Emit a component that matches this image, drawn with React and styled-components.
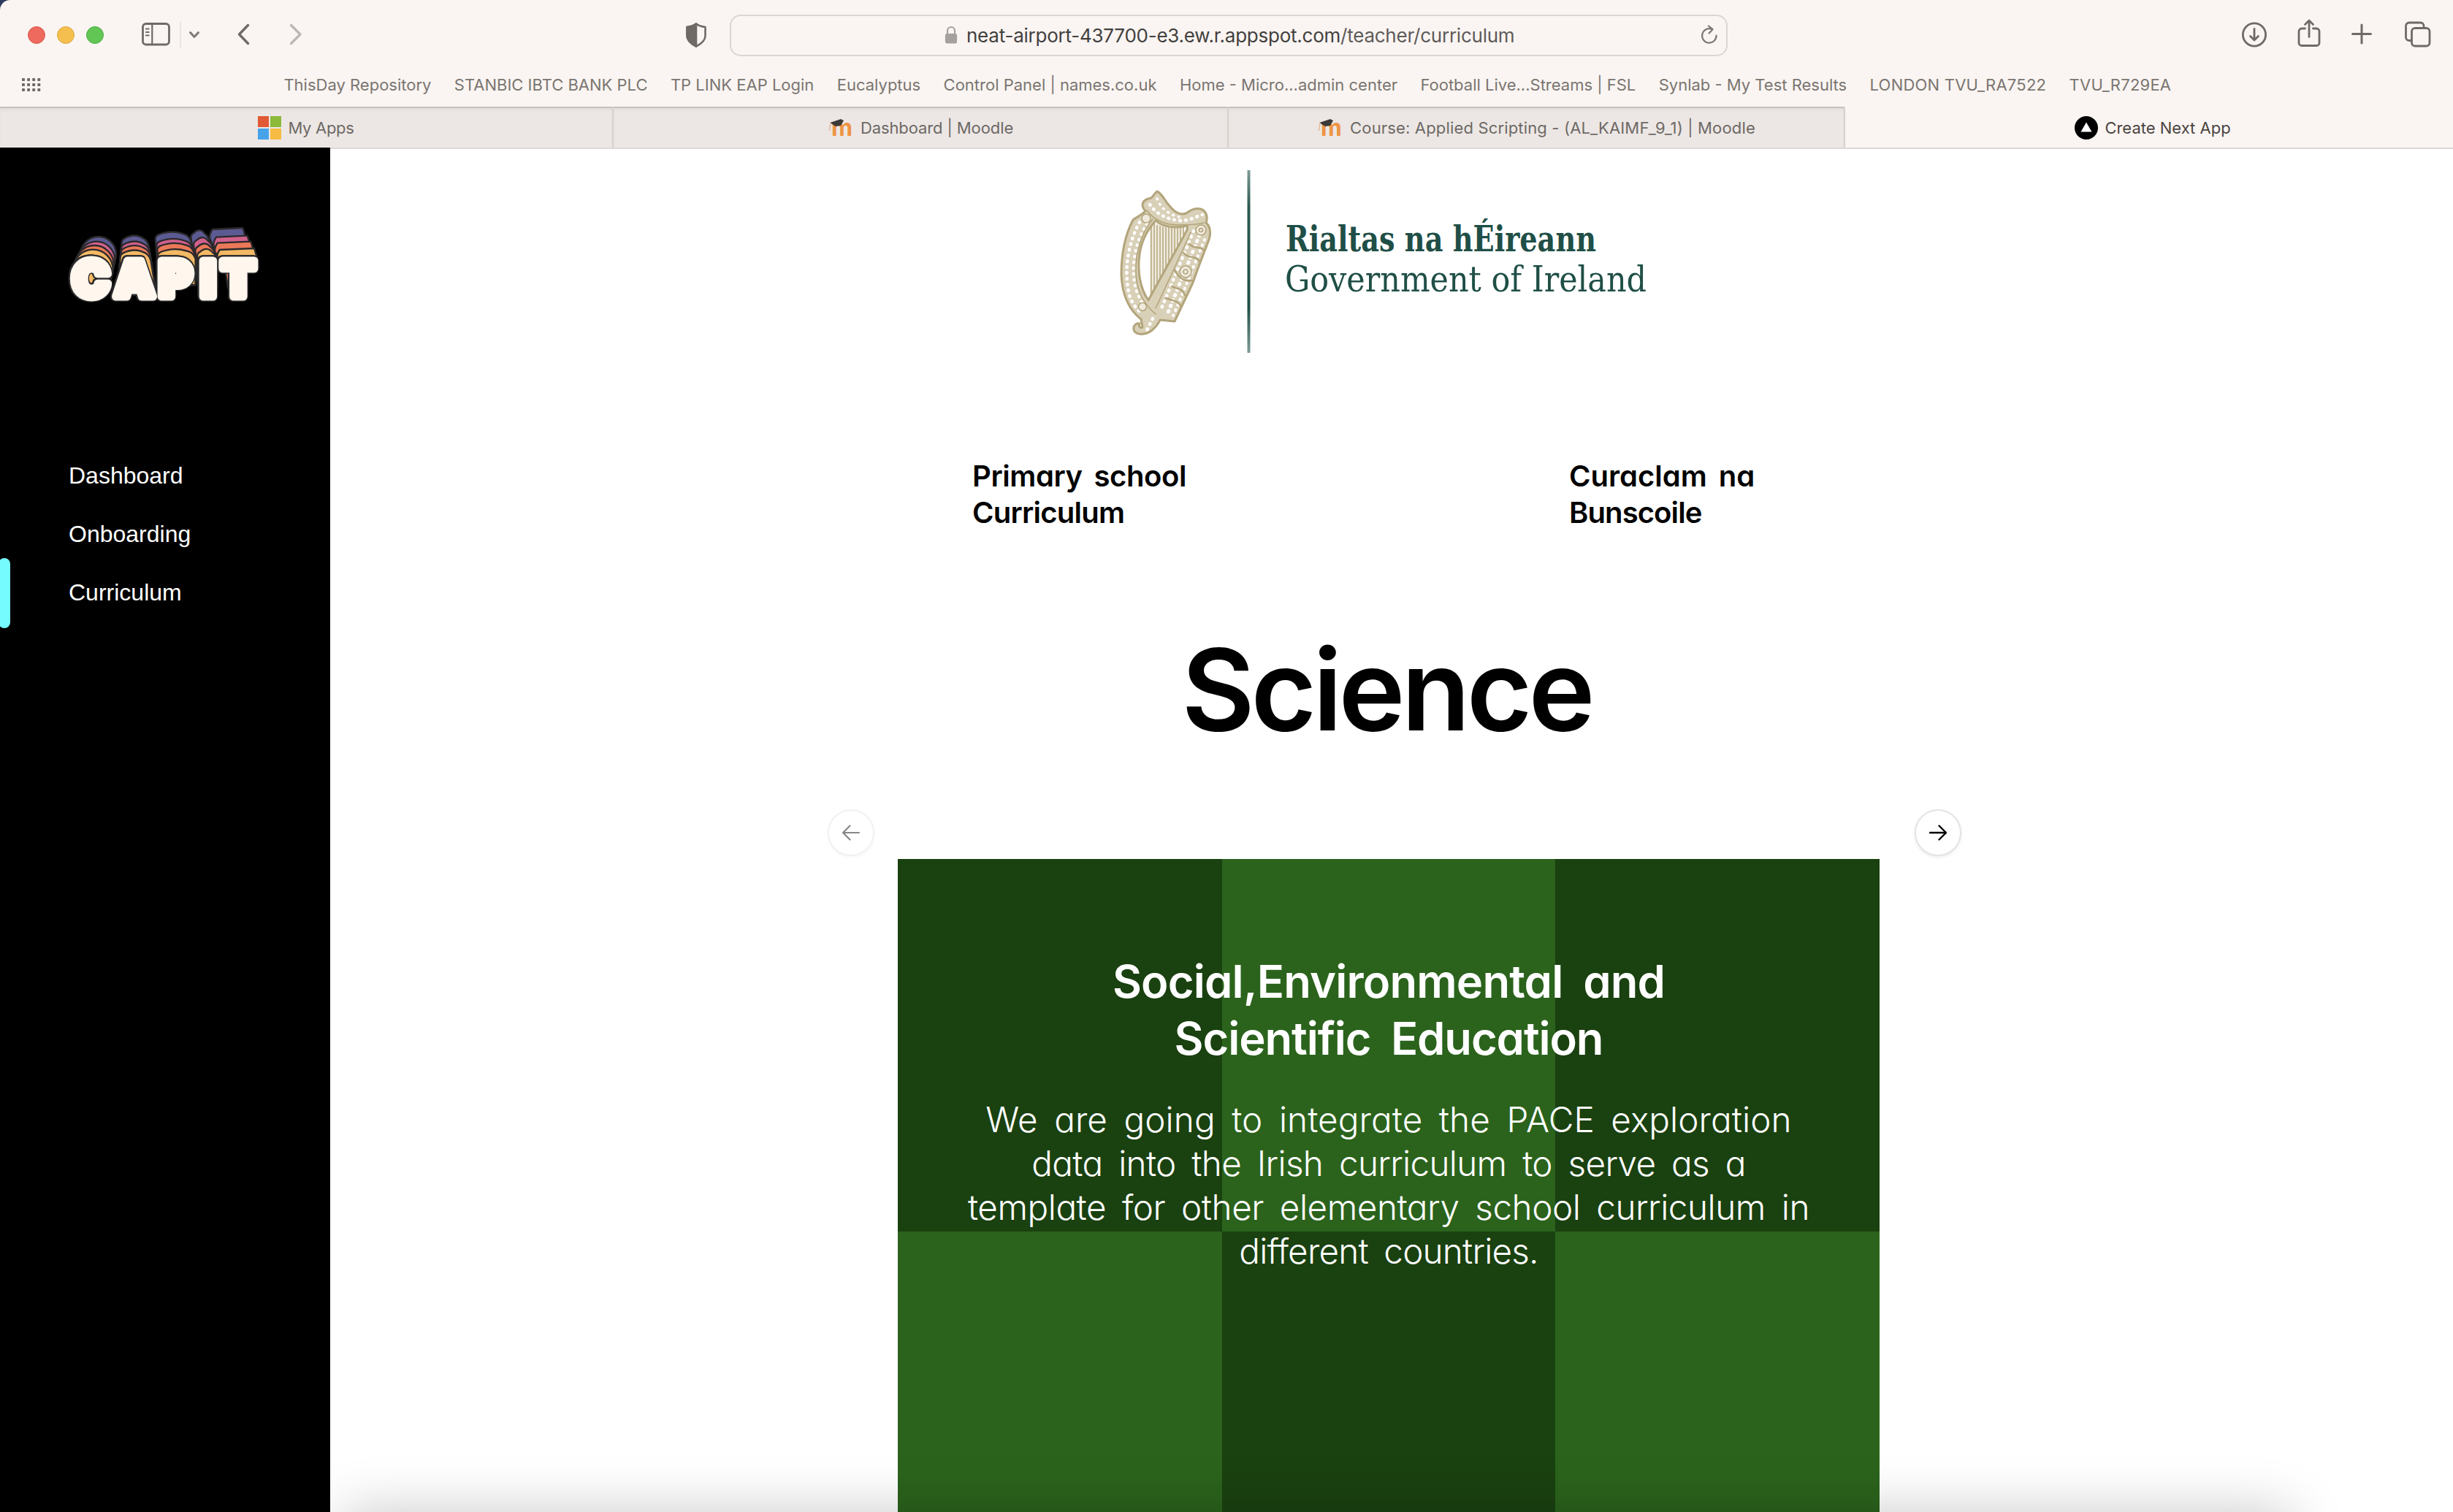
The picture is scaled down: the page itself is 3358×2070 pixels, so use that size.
import React from "react";
import styled, { createGlobalStyle } from "styled-components";

const GlobalStyle = createGlobalStyle`
  * { box-sizing: border-box; }
  body { margin: 0; background: #2c3a5c; overflow: hidden; }
  h1, h2, p { margin: 0; font-weight: inherit; }
`;

const ui = `"Inter", "Roboto", sans-serif`;

const Window = styled.div`
  width: 3358px;
  height: 2070px;
  display: flex;
  flex-direction: column;
  overflow: hidden;
  background: #faf5f2;
  border-top-left-radius: 14px;
  font-family: ${ui};
`;

const Icon = styled.svg`
  display: block;
  flex: none;
  fill: none;
  stroke: ${(p) => p.$color || "#6f6a66"};
  stroke-width: ${(p) => p.$weight || 3};
  stroke-linecap: round;
  stroke-linejoin: round;
`;

/* ---------- browser chrome ---------- */

const Toolbar = styled.div`
  height: 92px;
  padding: 4px 28px 0 38px;
  flex: none;
  display: flex;
  align-items: center;
`;

const Lights = styled.div`
  display: flex;
  gap: 16px;
  margin-right: 50px;
`;

const Light = styled.span`
  width: 24px;
  height: 24px;
  border-radius: 50%;
  background: ${(p) => p.$fill};
  border: 1px solid ${(p) => p.$edge};
`;

const Separator = styled.span`
  width: 2px;
  height: 36px;
  margin: 0 10px 0 12px;
  background: #e9e4e1;
`;

const HistoryButtons = styled.div`
  display: flex;
  gap: 50px;
  margin: 0 522px 0 50px;
`;

const AddressBar = styled.div`
  width: 1366px;
  height: 57px;
  margin-left: 31px;
  padding: 0 10px 0 292px;
  display: flex;
  align-items: center;
  border: 2px solid #dad6d2;
  border-radius: 15px;
`;

const Address = styled.span`
  flex: 1;
  margin-left: 12px;
  font-size: 26px;
  letter-spacing: -0.24px;
  white-space: nowrap;
  color: #5e5b59;
  b { font-weight: 400; color: #424040; }
`;

const Actions = styled.div`
  margin-left: auto;
  display: flex;
  gap: 40px;
  & > :last-child { margin-left: 2px; }
`;

const Bookmarks = styled.div`
  height: 54px;
  padding: 0 0 6px 29px;
  flex: none;
  display: flex;
  align-items: center;
  gap: 31.4px;
  font-size: 22px;
  letter-spacing: 0.03px;
  color: #7a7571;
  white-space: nowrap;
`;

const Bookmark = styled.span`
  letter-spacing: ${(p) => (p.$wide ? 0.22 : 0)}px;
`;

const AppsGrid = styled(Icon)`
  margin-right: 300px;
`;

const TabBar = styled.div`
  height: 56px;
  flex: none;
  display: flex;
`;

const Tab = styled.div`
  width: ${(p) => p.$width}px;
  flex: none;
  display: flex;
  align-items: center;
  justify-content: center;
  gap: 9px;
  padding-top: 1px;
  font-size: 22px;
  letter-spacing: ${(p) => p.$tracking || 0}px;
  white-space: nowrap;
  ${(p) => p.$active
    ? `color: #4a4542; padding-left: 10px;`
    : `color: #6e6966; background: #ece7e4; border-right: 2px solid #d6d1ce;
       box-shadow: inset 0 2px 0 #c6c1be, inset 0 5px 4px -1px #dfdad7;`}
`;

/* ---------- page ---------- */

const Page = styled.div`
  flex: 1;
  min-height: 0;
  display: flex;
`;

const Sidebar = styled.aside`
  width: 452px;
  flex: none;
  background: #000;
  padding-top: 78px;
`;

const LogoArt = styled.svg`
  display: block;
  margin-left: 60px;
  text {
    font-family: ${ui};
    font-weight: 900;
    font-size: 68px;
    stroke-width: 11px;
    stroke-linejoin: round;
    filter: drop-shadow(1.5px 0 0 #2b2a2c) drop-shadow(-1.5px 0 0 #2b2a2c)
      drop-shadow(0 1.5px 0 #2b2a2c) drop-shadow(0 -1.5px 0 #2b2a2c);
  }
`;

const Nav = styled.nav`
  margin-top: 171px;
  display: flex;
  flex-direction: column;
`;

const NavItem = styled.a`
  position: relative;
  height: 80px;
  padding: 1px 0 0 94px;
  display: flex;
  align-items: center;
  color: #fff;
  font: 32px "Liberation Sans", Arial, sans-serif;
  ${(p) => p.$active && `
    &::before {
      content: "";
      position: absolute;
      left: -2px;
      top: -7px;
      width: 16px;
      height: 96px;
      border-radius: 8px;
      background: #75fbfd;
    }`}
`;

const Main = styled.main`
  position: relative;
  flex: 1;
  overflow: hidden;
  background: #fff;
  border-top: 2px solid #dcd8d6;
  padding: 21px 0 0 681px;
  &::after {
    content: "";
    position: absolute;
    left: 14px;
    right: 220px;
    bottom: -90px;
    height: 90px;
    border-radius: 20px;
    box-shadow: 0 0 76px rgba(0, 0, 0, 0.22);
  }
`;

const Crest = styled.svg`
  display: block;
  margin-left: 387px;
  text { font-family: "DejaVu Serif Condensed", "DejaVu Serif", serif; fill: #1f4f47; }
`;

const geometric = `
  font-family: ${ui};
  font-feature-settings: "cv11";
`;

const Line = styled.span`
  display: block;
  letter-spacing: ${(p) => p.$tracking}px;
`;

const Subjects = styled.div`
  ${geometric}
  margin: 132px 0 0 198px;
  display: grid;
  grid-template-columns: 817px auto;
  font-size: 40px;
  line-height: 50px;
  font-weight: 570;
  word-spacing: 6px;
  color: #000;
`;

const Title = styled.h1`
  ${geometric}
  width: 1338px;
  margin: 137px 0 0 96px;
  text-align: center;
  font-size: 154px;
  line-height: 160px;
  font-weight: 570;
  letter-spacing: -5px;
  color: #000;
`;

const Arrows = styled.div`
  width: 1552px;
  margin-top: 84px;
  display: flex;
  justify-content: space-between;
`;

const RoundButton = styled.button`
  width: 64px;
  height: 64px;
  padding: 0;
  display: grid;
  place-items: center;
  border-radius: 50%;
  background: #fff;
  border: 2px solid #e4e4e4;
  box-shadow: 0 2px 4px rgba(0, 0, 0, 0.08);
  opacity: ${(p) => (p.disabled ? 0.5 : 1)};
`;

const Slide = styled.section`
  ${geometric}
  width: 1344px;
  height: 900px;
  margin: 4px 0 0 96px;
  padding-top: 129px;
  text-align: center;
  white-space: nowrap;
  color: #fff;
  background:
    linear-gradient(#2b631c, #2b631c) 444px 0 / 456px 510px no-repeat,
    linear-gradient(#2b631c, #2b631c) 0 510px / 444px 390px no-repeat,
    linear-gradient(#2b631c, #2b631c) 900px 510px / 444px 390px no-repeat,
    #1a4110;
`;

const SlideTitle = styled.h2`
  font-size: 61.5px;
  line-height: 78px;
  font-weight: 570;
  word-spacing: 13px;
`;

const SlideText = styled.p`
  margin-top: 42px;
  font-size: 47.6px;
  line-height: 60px;
  font-weight: 320;
  word-spacing: 9px;
`;

/* ---------- drawings ---------- */

/* Each layer of the logo's stacked shadow: disc for C, arches for A, P and I, bar for T. */
const LAYERS = [
  { fill: "#5c5a92", disc: [224, 205, 73], a: [320, 428, 127], p: [458, 602, 112], i: [604, 676, 105], bar: [682, 817, 102] },
  { fill: "#d0608c", disc: [216, 228, 76], a: [318, 432, 151], p: [463, 608, 140], i: [615, 690, 135], bar: [698, 836, 134] },
  { fill: "#eb7858", disc: [208, 247, 79], a: [317, 434, 168], p: [466, 614, 158], i: [622, 700, 160], bar: [703, 850, 158] },
  { fill: "#f4b964", disc: [202, 267, 82], a: [314, 436, 187], p: [468, 620, 183], i: [630, 708, 182], bar: [712, 864, 186] },
];

const arch = ([l, r, y], bl, br, bottom) =>
  `M${bl} ${bottom}L${l} ${y + 30}Q${l} ${y + 18} ${l + 12} ${y + 12}Q${(l + r) / 2} ${y - 12} ${r - 16} ${y + 14}Q${r - 2} ${y + 24} ${r + 3} ${y + 42}L${br} ${bottom}Z`;

const barPath = ([l, r, y]) =>
  `M${l} ${y + 38}Q${l - 4} ${y + 22} ${l + 10} ${y}L${r} ${y - 6}L${r + 9} ${y + 24}L${r + 12} 245H${l + 45}Z`;

function CapitLogo() {
  return (
    <LogoArt width="320" height="160" viewBox="0 0 320 160">
      <g transform="scale(.33333)" stroke="#2b2a2c" strokeWidth="7" strokeLinejoin="round">
        {LAYERS.map(({ fill, disc, a, p, i, bar }) => (
          <g key={fill} fill={fill}>
            <circle cx={disc[0]} cy={disc[1]} r={disc[2]} />
            <path d={arch(a, 300, 462, 370)} />
            <path d={arch(p, 475, 622, 330)} />
            <path d={arch(i, 636, 712, 340)} />
            <path d={barPath(bar)} />
          </g>
        ))}
        <path d="M745 270H770V350L757 345Z" fill="#eb7858" />
      </g>
      <text x="39 97 158 215 243" y="126" fill="#fff7ee" stroke="#fff7ee">CAPIT</text>
    </LogoArt>
  );
}

const STRINGS = [[46, 45, 156], [50, 48, 153], [54, 51, 148], [58, 52, 142], [62, 53, 134], [66, 54, 127], [70, 54, 119], [74, 54, 110], [78, 54, 101], [82, 54, 91], [86, 53, 81], [90, 52, 71]];

function Harp() {
  return (
    <g transform="translate(10 33)" fill="none" strokeLinejoin="round" strokeLinecap="round">
      <path d="M44 46L92 54L44 156Z" fill="#eeeadd" />
      <g stroke="#c3b794" strokeWidth="2">
        {STRINGS.map(([x, a, b]) => <path key={x} d={`M${x} ${a}V${b}`} />)}
      </g>
      <path
        fillRule="evenodd"
        fill="#d9d0b8"
        stroke="#b3a57b"
        strokeWidth="3"
        d="M54 4C50 7 48 11 46 13C40 14 34 17 34 23C34 27 36 28 38 31C33 36 28 38 21 43C10 64 5 92 5 118C6 144 14 165 32 179L34 190C31 192 28 188 30 185C25 184 21 188 22 193C23 200 36 202 46 195C52 190 56 185 58 180L78 182L103 129C111 105 120 84 125 70C128 62 127 52 121 47C124 38 121 30 113 28C105 26 99 30 94 34C82 38 74 28 67 19C63 13 59 6 54 4ZM52 44C62 53 80 55 95 51C97 56 93 60 90 66L42 153C30 136 27 112 30 90C33 70 42 55 52 44Z"
      />
      <g stroke="#fff" strokeWidth="4.5" strokeDasharray="1 7">
        <path d="M30 46C14 76 8 112 16 146C19 156 26 166 34 172" />
        <path d="M40 48C24 74 18 104 24 134C27 146 33 158 42 166" strokeWidth="4" />
        <path d="M44 22C52 34 66 42 84 44C98 45 108 38 116 36" />
        <path d="M54 14C58 26 70 36 84 39" strokeWidth="3.5" />
        <path d="M104 58L60 164" />
        <path d="M112 64L68 172" strokeWidth="5" />
        <path d="M119 70L84 156L76 174" strokeWidth="4" />
        <path d="M48 178L40 194" />
      </g>
      <g stroke="#b3a57b" strokeWidth="1.6">
        <path d="M100 60C84 96 68 130 52 164" />
        <path d="M40 30C50 44 66 50 84 50C94 50 108 50 118 47" />
        <path d="M48 42C30 64 22 96 26 126C29 146 38 160 52 172" />
        <circle cx="114" cy="57" r="7" fill="#efeadd" />
        <circle cx="114" cy="57" r="2.5" />
        <circle cx="93" cy="114" r="8" fill="#efeadd" />
        <circle cx="93" cy="114" r="3" />
        <circle cx="39" cy="41" r="6" fill="#efeadd" />
        <circle cx="34" cy="162" r="5.5" fill="#efeadd" />
        <path d="M98 76C106 84 110 78 118 84M90 88C98 98 106 90 112 100M78 112C84 122 90 128 102 126M74 134C82 138 88 136 92 146M66 150C74 154 80 152 86 160" strokeWidth="2.6" />
      </g>
    </g>
  );
}

function GovernmentCrest() {
  return (
    <Crest width="760" height="270" viewBox="0 0 760 270">
      <Harp />
      <defs>
        <linearGradient id="rule" x1="0" y1="0" x2="0" y2="1">
          <stop offset="0" stopColor="#7f9b96" />
          <stop offset=".2" stopColor="#2b5a53" />
          <stop offset=".75" stopColor="#1f4f47" />
          <stop offset="1" stopColor="#7f9b96" />
        </linearGradient>
      </defs>
      <rect x="187.5" y="8" width="4" height="250" fill="url(#rule)" />
      <text x="240" y="119" fontSize="48" fontWeight="700" textLength="425" lengthAdjust="spacingAndGlyphs">Rialtas na hÉireann</text>
      <text x="239" y="174" fontSize="49" textLength="495" lengthAdjust="spacingAndGlyphs">Government of Ireland</text>
    </Crest>
  );
}

function MoodleIcon() {
  return (
    <svg width="36" height="48" viewBox="-1 -8 36 48">
      <text x="4" y="27" fontFamily="Inter, sans-serif" fontWeight="700" fontSize="32" textLength="29" lengthAdjust="spacingAndGlyphs" fill="#ee9443">m</text>
      <path d="M2 9L17 4L21 6L17 13L10 14Z" fill="#3c3a39" />
      <path d="M3 9L1.5 20" stroke="#e9b99a" strokeWidth="1.6" />
    </svg>
  );
}

function WindowsIcon() {
  return (
    <svg width="32" height="32" viewBox="0 0 32 32">
      <path fill="#e15a35" d="M0 0h15v15H0z" />
      <path fill="#8cb93a" d="M17 0h15v15H17z" />
      <path fill="#46a3ea" d="M0 17h15v15H0z" />
      <path fill="#f5bb42" d="M17 17h15v15H17z" />
    </svg>
  );
}

function NextIcon() {
  return (
    <svg width="32" height="32" viewBox="0 0 32 32">
      <circle cx="16" cy="16" r="16" fill="#000" />
      <path fill="#fff" d="M16 8.5L23.5 21.5H8.5z" />
    </svg>
  );
}

const BOOKMARKS = [
  "ThisDay Repository",
  "STANBIC IBTC BANK PLC",
  "TP LINK EAP Login",
  "Eucalyptus",
  "Control Panel | names.co.uk",
  "Home - Micro...admin center",
  "Football Live...Streams | FSL",
  "Synlab - My Test Results",
  "LONDON TVU_RA7522",
  "TVU_R729EA",
];

function BrowserToolbar() {
  return (
    <Toolbar>
      <Lights>
        <Light $fill="#ee6a5f" $edge="#d9574c" />
        <Light $fill="#f5bf4f" $edge="#dba63c" />
        <Light $fill="#61c654" $edge="#4dab41" />
      </Lights>
      <Icon width="42" height="48" viewBox="0 0 42 48" $weight={2.8}>
        <rect x="3.5" y="8.5" width="36" height="28.5" rx="4.5" />
        <path d="M16.3 8.5V37M8 15.5h3.6M8 20h3.6M8 24.5h3.6" strokeWidth="2.2" />
      </Icon>
      <Separator />
      <Icon width="16" height="48" viewBox="0 0 16 48" $color="#7f7a76"><path d="M2.5 20.5L8 26.5L13.5 20.5" /></Icon>
      <HistoryButtons>
        <Icon width="20" height="48" viewBox="0 0 20 48" $weight={3.4}><path d="M15.5 10.5L3.5 23L15.5 35.5" /></Icon>
        <Icon width="22" height="48" viewBox="0 0 22 48" $color="#bdb8b5" $weight={3.4}><path d="M4.5 10.5L17 23L4.5 35.5" /></Icon>
      </HistoryButtons>
      <Icon width="30" height="48" viewBox="0 0 30 48" $weight={2.6}>
        <path d="M15 8.5C19 12 23 12.5 27.5 13V25C27.5 32 22 36 15 39.5C8 36 2.5 32 2.5 25V13C7 12.5 11 12 15 8.5Z" />
        <path d="M15 8.5C11 12 7 12.5 2.5 13V25C2.5 32 8 36 15 39.5Z" fill="#6f6a66" />
      </Icon>
      <AddressBar>
        <Icon width="18" height="28" viewBox="0 0 18 28" $color="#a5a19f" $weight={2.2}>
          <path d="M4 14V8a5 5 0 0 1 10 0v6" />
          <rect x="2" y="13" width="14" height="11.5" rx="1.5" fill="#a5a19f" />
        </Icon>
        <Address><b>neat-airport-437700-e3.ew.r.appspot.com</b>/teacher/curriculum</Address>
        <Icon width="26" height="30" viewBox="0 0 26 30" $color="#7d7874" $weight={2.2}>
          <path d="M22.5 15.5A9.7 9.7 0 1 1 16.5 7M12 2.5L17.5 7.2L12.5 12.5" />
        </Icon>
      </AddressBar>
      <Actions>
        <Icon width="36" height="48" viewBox="0 0 36 48" $weight={2.8}>
          <circle cx="18" cy="23.5" r="15.6" /><path d="M18 15.5V30.5M12.5 25.5L18 31L23.5 25.5" />
        </Icon>
        <Icon width="34" height="48" viewBox="0 0 34 48" $weight={2.8}>
          <path d="M11.5 15H7a4 4 0 0 0-4 4V34.5a4 4 0 0 0 4 4H27a4 4 0 0 0 4-4V19a4 4 0 0 0-4-4H22.5M17 4.5V26.5M11.5 9.5L17 4L22.5 9.5" />
        </Icon>
        <Icon width="30" height="48" viewBox="0 0 30 48"><path d="M2.5 22.5h25M15 10v25" /></Icon>
        <Icon width="40" height="48" viewBox="0 0 40 48" $weight={2.8}>
          <rect x="11.5" y="14.5" width="24.5" height="24.5" rx="4.5" />
          <path d="M11 31.5H8A4.5 4.5 0 0 1 3.5 27V11.5A4.5 4.5 0 0 1 8 7H23.5A4.5 4.5 0 0 1 28 11.5V14" />
        </Icon>
      </Actions>
    </Toolbar>
  );
}

const dots = [0, 1, 2].flatMap((r) => [0, 1, 2, 3].map((c) => [1 + c * 7.1, 1 + r * 7]));

export default function App() {
  return (
    <Window>
      <GlobalStyle />
      <BrowserToolbar />
      <Bookmarks>
        <AppsGrid width="28" height="20" viewBox="0 0 28 20">
          {dots.map(([x, y]) => <rect key={`${x}-${y}`} x={x} y={y} width="4" height="4" rx="1" fill="#6f6a66" stroke="none" />)}
        </AppsGrid>
        {BOOKMARKS.map((b) => <Bookmark key={b} $wide={b.includes("_")}>{b}</Bookmark>)}
      </Bookmarks>
      <TabBar>
        <Tab $width={840} $tracking={-0.3}><WindowsIcon />My Apps</Tab>
        <Tab $width={842} $tracking={-0.1}><MoodleIcon />Dashboard | Moodle</Tab>
        <Tab $width={844} $tracking={0.16}><MoodleIcon />Course: Applied Scripting - (AL_KAIMF_9_1) | Moodle</Tab>
        <Tab $width={832} $active><NextIcon />Create Next App</Tab>
      </TabBar>
      <Page>
        <Sidebar>
          <CapitLogo />
          <Nav>
            <NavItem>Dashboard</NavItem>
            <NavItem>Onboarding</NavItem>
            <NavItem $active>Curriculum</NavItem>
          </Nav>
        </Sidebar>
        <Main>
          <GovernmentCrest />
          <Subjects>
            <div>
              <Line $tracking={-0.4}>Primary school</Line>
              <Line $tracking={-0.75}>Curriculum</Line>
            </div>
            <div>
              <Line $tracking={0}>Curaclam na</Line>
              <Line $tracking={-0.9}>Bunscoile</Line>
            </div>
          </Subjects>
          <Title>Science</Title>
          <Arrows>
            <RoundButton disabled>
              <Icon width="32" height="32" viewBox="0 0 32 32" $color="#111" $weight={2.2}><path d="M27 16H5.5M14.5 6.5L5 16L14.5 25.5" /></Icon>
            </RoundButton>
            <RoundButton>
              <Icon width="32" height="32" viewBox="0 0 32 32" $color="#000" $weight={2.4}><path d="M5 16H26.5M17.5 6.5L27 16L17.5 25.5" /></Icon>
            </RoundButton>
          </Arrows>
          <Slide>
            <SlideTitle>
              <Line $tracking={-0.8}>Social,Environmental and</Line>
              <Line $tracking={-1.1}>Scientific Education</Line>
            </SlideTitle>
            <SlideText>
              <Line $tracking={0.1}>We are going to integrate the PACE exploration</Line>
              <Line $tracking={-0.67}>data into the Irish curriculum to serve as a</Line>
              <Line $tracking={-0.46}>template for other elementary school curriculum in</Line>
              <Line $tracking={-0.8}>different countries.</Line>
            </SlideText>
          </Slide>
        </Main>
      </Page>
    </Window>
  );
}
